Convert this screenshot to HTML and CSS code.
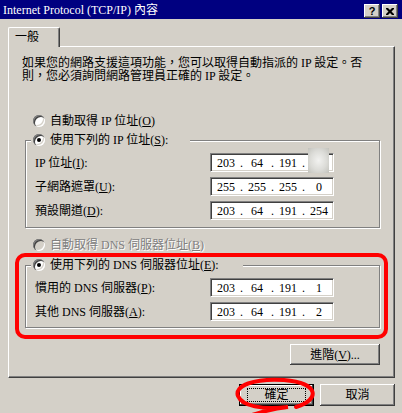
FILE: index.html
```html
<!DOCTYPE html>
<html lang="zh-Hant">
  <head>
    <meta charset="UTF-8" />
    <title>Internet Protocol (TCP/IP) 內容</title>
    <link rel="stylesheet" href="styles.css">
  </head>
  <body>
    <div class="window">
      <div class="titlebar">
        <span class="title">Internet Protocol (TCP/IP) 內容</span>
        <div class="caption-btns">
          <span class="cap-btn">?</span>
          <span class="cap-btn">
            <svg width="8" height="7" viewBox="0 0 8 7">
              <path d="M0 0h2l2 2 2-2h2v1L5.5 3.5 8 6v1H6L4 5 2 7H0V6l2.5-2.5L0 1z" fill="#000"/>
            </svg>
          </span>
        </div>
      </div>

      <div class="tabs">
        <div class="tab">一般</div>
      </div>

      <div class="panel">
        <p class="intro">如果您的網路支援這項功能，您可以取得自動指派的 IP 設定。否<br>則，您必須詢問網路管理員正確的 IP 設定。</p>

        <div class="opt opt-ip"><span class="radio"></span><span>自動取得 IP 位址(<u>O</u>)</span></div>

        <div class="group group-ip">
          <div class="legend legend-ip"><span class="radio checked"></span><span>使用下列的 IP 位址(<u>S</u>):</span></div>
          <div class="fields">
            <span class="lbl">IP 位址(<u>I</u>):</span>
            <div class="ip">
              <span class="oct">203</span><span class="dot">.</span><span class="oct">64</span><span class="dot">.</span><span class="oct">191</span><span class="dot">.</span><span class="oct"></span>
              <span class="smudge"></span>
            </div>
            <span class="lbl">子網路遮罩(<u>U</u>):</span>
            <div class="ip">
              <span class="oct">255</span><span class="dot">.</span><span class="oct">255</span><span class="dot">.</span><span class="oct">255</span><span class="dot">.</span><span class="oct">0</span>
            </div>
            <span class="lbl">預設閘道(<u>D</u>):</span>
            <div class="ip">
              <span class="oct">203</span><span class="dot">.</span><span class="oct">64</span><span class="dot">.</span><span class="oct">191</span><span class="dot">.</span><span class="oct">254</span>
            </div>
          </div>
        </div>

        <div class="opt opt-dns disabled"><span class="radio"></span><span>自動取得 DNS 伺服器位址(<u>B</u>)</span></div>

        <div class="group group-dns">
          <div class="legend legend-dns"><span class="radio checked"></span><span>使用下列的 DNS 伺服器位址(<u>E</u>):</span></div>
          <div class="fields">
            <span class="lbl">慣用的 DNS 伺服器(<u>P</u>):</span>
            <div class="ip">
              <span class="oct">203</span><span class="dot">.</span><span class="oct">64</span><span class="dot">.</span><span class="oct">191</span><span class="dot">.</span><span class="oct">1</span>
            </div>
            <span class="lbl">其他 DNS 伺服器(<u>A</u>):</span>
            <div class="ip">
              <span class="oct">203</span><span class="dot">.</span><span class="oct">64</span><span class="dot">.</span><span class="oct">191</span><span class="dot">.</span><span class="oct">2</span>
            </div>
          </div>
        </div>

        <div class="adv-row">
          <button class="btn btn-adv"><span>進階(<u>V</u>)...</span></button>
        </div>
      </div>

      <div class="footer">
        <button class="btn btn-default"><span class="focus">確定</span></button>
        <button class="btn">取消</button>
      </div>

      <!-- red marks drawn over the screenshot -->
      <div class="mark-box"></div>
      <svg class="mark-ring" width="402" height="413" viewBox="0 0 402 413">
        <path d="M296 407 C320 400 320 383 284 380 C254 378 234 386 238 396 C242 406 262 410 288 407 C270 409 262 412 252 415" fill="none" stroke="#f00" stroke-width="4" stroke-linecap="round"/>
      </svg>
    </div>
  </body>
</html>
```

FILE: styles.css
```css
* {
  box-sizing: border-box;
}
body {
  margin: 0;
  background: #d4d0c8;
  font-family: "Liberation Serif", "Noto Sans CJK TC", serif;
  font-size: 12px;
  line-height: 14px;
  color: #000;
}
.window {
  width: 402px;
  height: 413px;
  overflow: hidden;
  position: relative;
  background: #d4d0c8;
}
.titlebar {
  height: 19px;
  background: #000080;
  color: #fff;
  display: flex;
  justify-content: space-between;
  padding: 0 4px 0 3px;
}
.title {
  line-height: 21px;
  white-space: nowrap;
}
.caption-btns {
  display: flex;
  gap: 2px;
  padding-top: 4px;
}
.cap-btn {
  width: 16px;
  height: 14px;
  background: #d4d0c8;
  box-shadow: inset -1px -1px #404040, inset 1px 1px #fff, inset -2px -2px #808080;
  display: flex;
  align-items: center;
  justify-content: center;
  color: #000;
  font-family: "Liberation Sans", sans-serif;
  font-weight: bold;
  font-size: 11px;
  line-height: 1;
}
.tabs {
  height: 27px;
  padding: 8px 0 0 8px;
}
.tab {
  position: relative;
  z-index: 1;
  width: 52px;
  height: 20px;
  background: #d4d0c8;
  border-top: 1px solid #fff;
  border-left: 1px solid #fff;
  border-right: 1px solid #404040;
  border-radius: 2px 2px 0 0;
  box-shadow: inset -1px 0 #808080;
  padding-left: 6px;
  line-height: 18px;
}
.panel {
  margin-left: 8px;
  width: 387px;
  height: 332px;
  border: 1px solid;
  border-color: #fff #404040 #404040 #fff;
  box-shadow: inset -1px -1px #808080;
  padding: 10px 14px 0 16px;
}
.intro {
  margin: 0 0 0 -3px;
  line-height: 13px;
  white-space: nowrap;
}
.opt,
.legend {
  display: flex;
  align-items: center;
  gap: 5px;
  height: 14px;
  white-space: nowrap;
}
.opt {
  margin-left: 8px;
}
.opt-ip {
  margin-top: 31px;
}
.opt-dns {
  margin-top: 10px;
}
.disabled {
  color: #808080;
  text-shadow: 1px 1px 0 #fff;
}
.radio {
  flex: none;
  width: 12px;
  height: 12px;
  border-radius: 50%;
  background: #fff;
  box-shadow: inset 1px 1px 0 #808080, inset 2px 2px 0 #404040, inset -1px -1px 0 #fff, inset -2px -2px 0 #d4d0c8;
  display: flex;
  align-items: center;
  justify-content: center;
}
.disabled .radio {
  background: #d4d0c8;
}
.radio.checked::after {
  content: "";
  width: 4px;
  height: 4px;
  border-radius: 50%;
  background: #000;
}
.group {
  width: 355px;
  border: 1px solid #808080;
  box-shadow: 1px 1px 0 #fff, inset 1px 1px 0 #fff;
  padding: 0 0 7px 9px;
}
.group-ip {
  margin-top: 12px;
}
.group-dns {
  margin-top: 13px;
  padding-bottom: 6px;
}
.legend {
  margin: -8px 0 0 -4px;
  padding-left: 2px;
  background: #d4d0c8;
}
.legend-ip {
  width: 159px;
}
.legend-dns {
  width: 212px;
}
.fields {
  display: grid;
  grid-template-columns: 175px 124px;
  grid-auto-rows: 19px;
  row-gap: 5px;
  margin-top: 6px;
}
.lbl {
  align-self: center;
  white-space: nowrap;
}
.ip {
  position: relative;
  display: flex;
  align-items: center;
  height: 19px;
  background: #fff;
  border: 1px solid;
  border-color: #808080 #fff #fff #808080;
  box-shadow: inset 1px 1px #404040, inset -1px -1px #d4d0c8;
  padding-left: 3px;
}
.oct {
  width: 24px;
  text-align: center;
}
.dot {
  width: 7px;
  text-align: center;
}
.smudge {
  position: absolute;
  left: 97px;
  top: -6px;
  width: 21px;
  height: 25px;
  background: radial-gradient(ellipse at center, #f2f2f0 0%, #dcdcd8 55%, #c2c2bc 100%);
}
.adv-row {
  display: flex;
  justify-content: flex-end;
  margin-top: 16px;
}
.btn {
  font: inherit;
  color: #000;
  background: #d4d0c8;
  border: none;
  padding: 0;
  width: 75px;
  height: 22px;
  box-shadow: inset -1px -1px #404040, inset 1px 1px #fff, inset -2px -2px #808080;
  display: flex;
  align-items: center;
  justify-content: center;
}
.btn-adv {
  width: 90px;
  height: 21px;
}
.btn-default {
  border: 1px solid #000;
}
.focus {
  border: 1px dotted #000;
  width: 59px;
  height: 14px;
  line-height: 12px;
  text-align: center;
}
.footer {
  display: flex;
  justify-content: flex-end;
  gap: 6px;
  padding: 6px 7px 0 0;
}
.mark-box {
  position: absolute;
  left: 15px;
  top: 253px;
  width: 373px;
  height: 86px;
  border: 4px solid #f00;
  border-radius: 10px;
}
.mark-ring {
  position: absolute;
  left: 0;
  top: 0;
  pointer-events: none;
}
```
